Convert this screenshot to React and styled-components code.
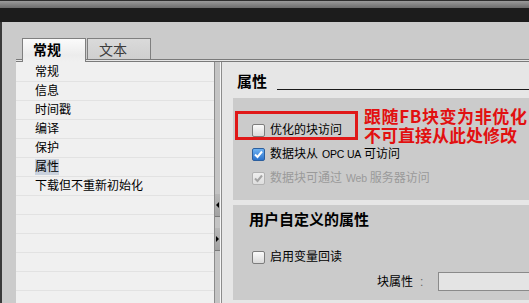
import React from 'react'
import styled, { createGlobalStyle } from 'styled-components'

const GlobalStyle = createGlobalStyle`
  html, body {
    margin: 0;
    padding: 0;
  }
  body {
    width: 529px;
    height: 303px;
    overflow: hidden;
    background: #cbcbcb;
    font-family: "Liberation Sans", "Noto Sans CJK SC", sans-serif;
    font-size: 12px;
    color: #000;
  }
`

const TitleBar = styled.div`
    height: 22px;
    background: linear-gradient(to bottom, #2e2e2e 0, #2e2e2e 1px, #9a9a9a 1px, #6c6c6c 8px, #1c1c1c 8px, #1c1c1c 22px);
`

const Window = styled.div`
    height: 281px;
    display: flex;
    flex-direction: column;
    border-left: 2px solid #3a3a3a;
    padding-left: 14px;
    background: #cbcbcb;
`

const TabRow = styled.div`
    height: 37px;
    flex-shrink: 0;
    display: flex;
    align-items: flex-end;
    gap: 1px;
    padding-left: 6px;
`

const Tab = styled.div`
    box-sizing: border-box;
    width: 64px;
    height: ${p => p.$active ? 24 : 21}px;
    margin-bottom: ${p => p.$active ? -3 : 0}px;
    position: relative;
    z-index: ${p => p.$active ? 2 : 0};
    border: 1px solid #7f7f7f;
    border-bottom: none;
    padding: ${p => p.$active ? '0 0 3px 10px' : '0 0 0 11px'};
    display: flex;
    align-items: center;
    font-size: 14px;
    font-weight: ${p => p.$active ? 'bold' : 'normal'};
    color: ${p => p.$active ? '#000' : '#3c3c3c'};
    background: ${p => p.$active
        ? 'linear-gradient(to bottom, #fbfbfb, #ececec 70%, #f0f0f0)'
        : 'linear-gradient(to bottom, #dadada, #cfcfcf)'};
`

const Frame = styled.div`
    flex: 1;
    display: flex;
    border-top: 3px double #7a7a7a;
    background: #e6e6e6;
    min-height: 0;
`

const ListPanel = styled.div`
    width: 198px;
    flex-shrink: 0;
    background: #f0f0f0;
    padding-top: 1px;
    overflow: hidden;
`

const ListRow = styled.div`
    height: 18px;
    border-bottom: 1px solid #e2e2e2;
    padding-left: 19px;
    display: flex;
    align-items: center;
    line-height: 16px;
`

const Selected = styled.span`
    background: #c9d1dd;
`

const Splitter = styled.div`
    box-sizing: border-box;
    width: 8px;
    flex-shrink: 0;
    border-left: 1px solid #8c8c8c;
    border-right: 1px solid #8c8c8c;
    background: #c4c4c4;
    box-shadow: inset -1px 0 #f6f6f6;
    padding-top: 132px;
    display: flex;
    flex-direction: column;
    gap: 11px;
`

const SplitButton = styled.div`
    height: 22px;
    margin-right: 1px;
    border-bottom: 1px solid #7a7a7a;
    background: linear-gradient(to bottom, #b8b8b8, #a2a2a2);
    display: flex;
    align-items: center;
    padding-left: 1px;
`

const Arrow = styled.span`
    width: 0;
    height: 0;
    border-top: 3px solid transparent;
    border-bottom: 3px solid transparent;
    ${p => p.$dir === 'left'
        ? 'border-right: 3px solid #000;'
        : 'border-left: 3px solid #000;'}
`

const RightPanel = styled.div`
    flex: 1;
    min-width: 0;
    padding-left: 11px;
    display: flex;
    flex-direction: column;
    overflow: hidden;
`

const Header = styled.div`
    box-sizing: border-box;
    height: 36px;
    flex-shrink: 0;
    display: flex;
    align-items: flex-start;
    padding: 10px 0 0 4px;
`

const Title = styled.div`
    font-size: 15px;
    font-weight: bold;
    line-height: 20px;
`

const Rule = styled.div`
    flex: 1;
    height: 1px;
    margin: 17px 0 0 10px;
    background: #1a1a1a;
`

const Group = styled.div`
    box-sizing: border-box;
    position: relative;
    flex-shrink: 0;
    height: ${p => p.$h}px;
    margin-top: ${p => p.$mt || 0}px;
    padding: ${p => p.$pad};
    background: #cbcbcb;
    overflow: hidden;
`

const GroupTitle = styled.div`
    font-size: 15px;
    font-weight: bold;
    line-height: 20px;
    margin-bottom: 15px;
`

const CheckRow = styled.div`
    height: 24px;
    display: flex;
    align-items: center;
    gap: 5px;
    margin-left: ${p => p.$ml || 0}px;
    color: ${p => p.$disabled ? '#9a9a9a' : '#000'};
    line-height: 16px;
    white-space: nowrap;
`

const Label = styled.span`
    display: inline-block;
`

const Box = styled.span`
    box-sizing: border-box;
    width: 13px;
    height: 13px;
    border-radius: 2px;
    display: inline-flex;
    align-items: center;
    justify-content: center;
    border: 1px solid ${p => p.$state === 'checked' ? '#2c5f9e' : p.$state === 'disabled' ? '#b2b2b2' : '#7d7d7d'};
    background: ${p => p.$state === 'checked'
        ? 'linear-gradient(to bottom, #6fb2f2, #2a72cc)'
        : p.$state === 'disabled'
            ? 'linear-gradient(to bottom, #efefef, #dedede)'
            : 'linear-gradient(to bottom, #fafafa, #dadada)'};
`

const Latin = styled.span`
    font-size: 10.5px;
    letter-spacing: -0.2px;
    margin: 0 3px 0 4px;
`

const Callout = styled.div`
    position: absolute;
    left: 2px;
    top: 13px;
    width: 123px;
    height: 29px;
    box-sizing: border-box;
    border: 3px solid #e01818;
`

const Note = styled.div`
    position: absolute;
    left: 131px;
    top: 9px;
    color: #e21010;
    font-family: "Noto Sans CJK SC", sans-serif;
    font-size: 17px;
    font-weight: bold;
    line-height: 18.5px;
    white-space: nowrap;
`

const NoteLine = styled.div`
    letter-spacing: ${p => p.$spread || 0}px;
`

const FieldRow = styled.div`
    height: 19px;
    margin: 3px 0 0 128px;
    display: flex;
    align-items: center;
    line-height: 16px;
    white-space: nowrap;
`

const Colon = styled.span`
    margin-left: 7px;
    color: #6a6a6a;
`

const Input = styled.div`
    box-sizing: border-box;
    flex-shrink: 0;
    width: 120px;
    height: 19px;
    margin-left: 15px;
    border: 1px solid #8a8a8a;
    background: #e4e4e4;
`

function Check({ state }) {
    return (
        <Box $state={state}>
            {state !== 'unchecked' && (
                <svg width="11" height="11" viewBox="0 0 11 11">
                    <path d="M2 5.5 L4.5 8 L9 2.5" fill="none"
                        stroke={state === 'checked' ? '#fff' : '#a4a4a4'}
                        strokeWidth="2" />
                </svg>
            )}
        </Box>
    )
}

const items = ['常规', '信息', '时间戳', '编译', '保护', '属性', '下载但不重新初始化']

export default function App() {
    const rows = [...items, ...Array(6).fill('')]
    return (
        <>
            <GlobalStyle />
            <TitleBar />
            <Window>
                <TabRow>
                    <Tab $active>常规</Tab>
                    <Tab>文本</Tab>
                </TabRow>
                <Frame>
                    <ListPanel>
                        {rows.map((t, i) => (
                            <ListRow key={i}>
                                {t === '属性' ? <Selected>{t}</Selected> : t}
                            </ListRow>
                        ))}
                    </ListPanel>
                    <Splitter>
                        <SplitButton><Arrow $dir="left" /></SplitButton>
                        <SplitButton><Arrow $dir="right" /></SplitButton>
                    </Splitter>
                    <RightPanel>
                        <Header>
                            <Title>属性</Title>
                            <Rule />
                        </Header>
                        <Group $h={102} $pad="20px 0 0 19px">
                            <CheckRow><Check state="unchecked" /><Label>优化的块访问</Label></CheckRow>
                            <CheckRow><Check state="checked" /><Label>数据块从<Latin>OPC UA</Latin>可访问</Label></CheckRow>
                            <CheckRow $disabled><Check state="disabled" /><Label>数据块可通过<Latin>Web</Latin>服务器访问</Label></CheckRow>
                            <Callout />
                            <Note>
                                <NoteLine $spread={0.6}>跟随FB块变为非优化</NoteLine>
                                <NoteLine>不可直接从此处修改</NoteLine>
                            </Note>
                        </Group>
                        <Group $h={95} $mt={5} $pad="5px 0 0 16px">
                            <GroupTitle>用户自定义的属性</GroupTitle>
                            <CheckRow $ml={3}><Check state="unchecked" /><Label>启用变量回读</Label></CheckRow>
                            <FieldRow>
                                块属性<Colon>:</Colon>
                                <Input />
                            </FieldRow>
                        </Group>
                    </RightPanel>
                </Frame>
            </Window>
        </>
    )
}
